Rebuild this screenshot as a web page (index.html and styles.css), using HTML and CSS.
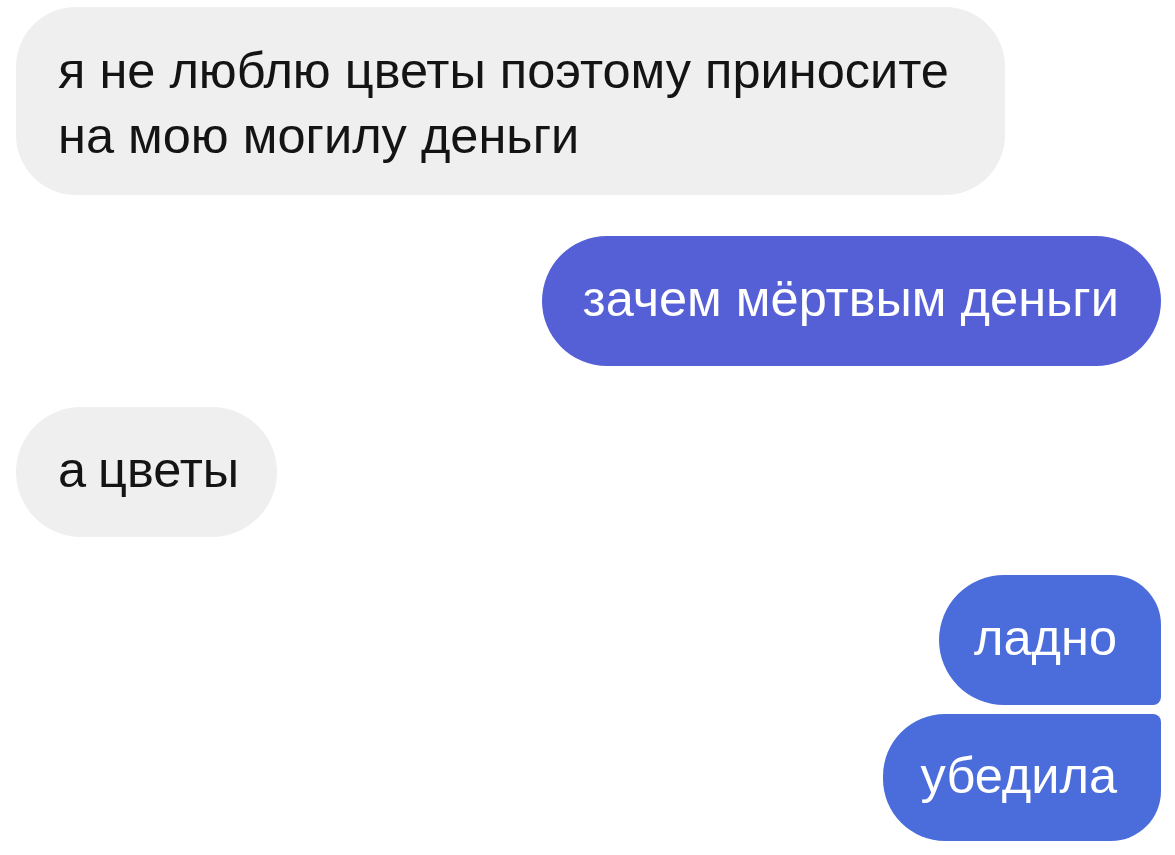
FILE: index.html
```html
<!DOCTYPE html>
<html lang="ru">
<head>
<meta charset="utf-8">
<title>Чат</title>
<link rel="stylesheet" href="styles.css">
</head>
<body>
<div class="chat">
  <div class="row row-in row-first">
    <div class="bubble bubble-in bubble-wide">я не люблю цветы поэтому приносите на мою могилу деньги</div>
  </div>
  <div class="row row-out">
    <div class="bubble bubble-out bubble-violet">зачем мёртвым деньги</div>
  </div>
  <div class="row row-in">
    <div class="bubble bubble-in bubble-short">а цветы</div>
  </div>
  <div class="group-out">
    <div class="bubble bubble-out bubble-blue bubble-top">ладно</div>
    <div class="bubble bubble-out bubble-blue bubble-bottom">убедила</div>
  </div>
</div>
</body>
</html>
```

FILE: styles.css
```css
html, body {
  margin: 0;
  padding: 0;
  background: #ffffff;
}

body {
  width: 1175px;
  height: 855px;
  overflow: hidden;
  font-family: "Liberation Sans", Arial, sans-serif;
}

.chat {
  display: flex;
  flex-direction: column;
  padding: 7px 14px 0 16px;
}

.row {
  display: flex;
  margin-top: 41px;
}

.row-first {
  margin-top: 0;
}

.row-in {
  justify-content: flex-start;
}

.row-out {
  justify-content: flex-end;
}

.bubble {
  box-sizing: border-box;
  font-size: 50.5px;
  line-height: 65px;
  border-radius: 65px;
  padding: 30px 42px 35px 41px;
  white-space: nowrap;
}

.bubble-in {
  background: #efefef;
  color: #141414;
  padding-left: 42px;
  padding-right: 44px;
}

.bubble-short {
  padding-right: 38px;
  word-spacing: -2px;
}

.bubble-wide {
  width: 989px;
  white-space: normal;
  padding: 31px 42px 27px;
  border-radius: 60px;
}

.bubble-out {
  color: #ffffff;
}

.bubble-violet {
  background: #5560d6;
}

.group-out {
  display: flex;
  flex-direction: column;
  align-items: flex-end;
  gap: 9px;
  margin-top: 38px;
}

.bubble-blue {
  background: #4a6ddb;
}

.bubble-top {
  border-radius: 65px 50px 8px 65px;
  padding-left: 35px;
  padding-right: 44px;
}

.bubble-bottom {
  border-radius: 62px 8px 50px 62px;
  padding-top: 29px;
  padding-bottom: 33px;
  padding-left: 38px;
  padding-right: 44px;
}
```
